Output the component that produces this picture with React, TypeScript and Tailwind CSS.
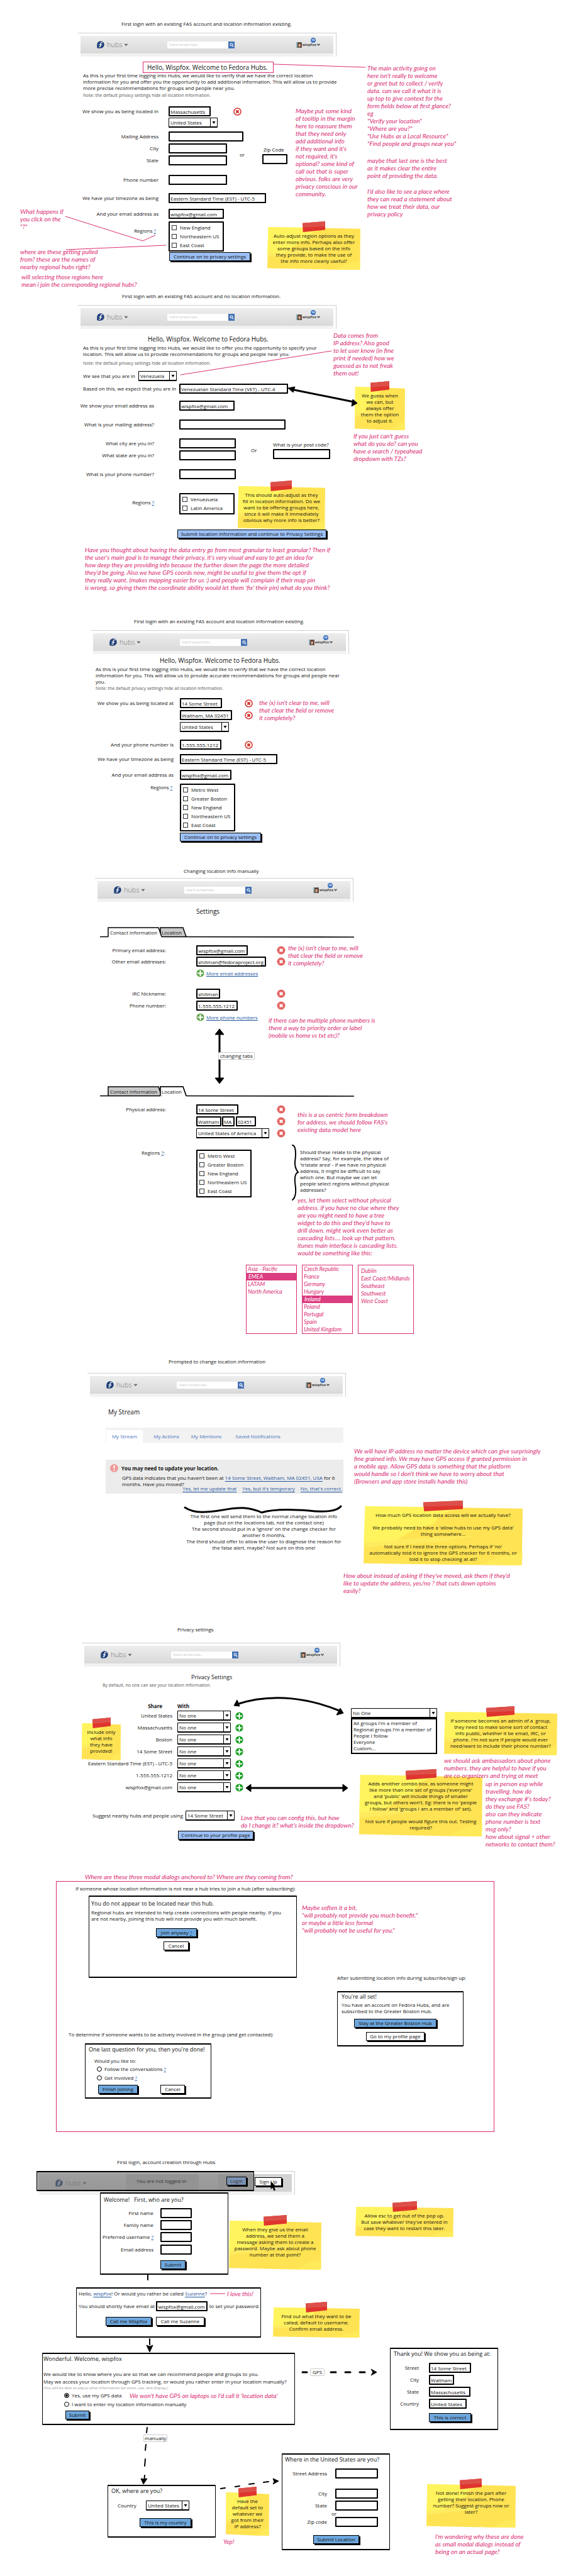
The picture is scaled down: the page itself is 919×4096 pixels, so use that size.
import React from "react";

type Kids = { children?: React.ReactNode; className?: string };

/* ---------- drawing primitives ---------- */

function HubsLogo() {
  return (
    <svg viewBox="0 0 24 24" className="h-3 w-3 shrink-0" aria-hidden="true">
      <path d="M12 0.5A11.5 11.5 0 0 0 .5 12v8.6A2.9 2.9 0 0 0 3.4 23.5H12A11.5 11.5 0 0 0 12 .5Z" fill="#1f3f77" />
      <path
        d="M17 5.2c-3.2-1-5 .6-5 3.6v6.4c0 2.8-1.6 4.2-4.6 3.6M7.6 12.2h8"
        fill="none"
        stroke="#fff"
        strokeWidth="2.6"
        strokeLinecap="round"
      />
    </svg>
  );
}

function Chevron() {
  return (
    <svg viewBox="0 0 10 8" className="h-1 w-[5px] shrink-0" aria-hidden="true">
      <path d="M1 1.5 5 6l4-4.500" fill="none" stroke="#444" strokeWidth="2.4" />
    </svg>
  );
}

function Avatar() {
  return (
    <svg viewBox="0 0 18 18" className="h-[9px] w-[9px] shrink-0" aria-hidden="true">
      <rect width="18" height="18" fill="#6f6259" />
      <rect width="4" height="18" fill="#8fb0b8" />
      <ellipse cx="10" cy="9" rx="4.500" ry="6" fill="#dba98c" />
      <path d="M4 18c0-14 2-16 6-16s7 3 6 16l-3-3c2-8 0-10-3-10s-4 3-3 10Z" fill="#4a2f26" />
    </svg>
  );
}

function Bar({ children, className = "" }: Kids) {
  return (
    <header className={`h-[38px] w-[411px] border-t border-r border-[#cfcfcf] ${className}`}>
      <div className="relative mt-[4px] ml-[4px] flex h-[28px] w-[402px] items-center bg-linear-to-b from-[#ededed] to-[#d9d9d9] pl-[26px]">
        <a href="#home" className="flex w-[112px] items-center">
          <HubsLogo />
          <span className="mr-[3px] ml-[4px] text-[11px] leading-3 font-light text-[#777]">hubs</span>
          <Chevron />
        </a>
        {children}
      </div>
      <div className="ml-[4px] h-[5px] w-[402px] bg-[#f2f2f2]" />
    </header>
  );
}

function HubsHeader({ className = "" }: { className?: string }) {
  return (
    <Bar className={className}>
      <div className="flex h-[11px]">
        <input
          type="search"
          aria-label="Search across hubs"
          placeholder="Search across hubs..."
          className="w-[97px] bg-white px-[3px] text-[5px] font-light outline-none placeholder:text-[#999]"
        />
        <button type="button" aria-label="Search" className="flex w-[10px] items-center justify-center bg-[#4472b4]">
          <svg viewBox="0 0 12 12" className="h-[7px] w-[7px]" aria-hidden="true">
            <circle cx="5" cy="5" r="3.200" fill="none" stroke="#fff" strokeWidth="1.800" />
            <path d="m7.400 7.400 3.200 3.600" stroke="#fff" strokeWidth="2" />
          </svg>
        </button>
      </div>
      <div className="relative mr-[21px] ml-auto flex items-center gap-px">
        <Avatar />
        <span className="text-[6px] leading-2 font-semibold text-[#222]">wispfox</span>
        <Chevron />
        <span className="absolute -top-[7px] left-[23px] flex h-2 w-2 items-center justify-center rounded-full bg-[#3b72c0] text-[4px] leading-none font-bold text-white">
          18
        </span>
      </div>
    </Bar>
  );
}

function RemoveOutline() {
  return (
    <button type="button" aria-label="Remove" className="h-[13px] w-[13px] shrink-0">
      <svg viewBox="0 0 26 26" aria-hidden="true">
        <circle cx="13" cy="13" r="11" fill="#fff" stroke="#d22e28" strokeWidth="3" />
        <path d="m9 9 8 8m0-8-8 8" stroke="#d22e28" strokeWidth="4.500" />
      </svg>
    </button>
  );
}

function RemoveSolid({ className = "" }: { className?: string }) {
  return (
    <button type="button" aria-label="Remove" className={`h-[14px] w-[14px] shrink-0 ${className}`}>
      <svg viewBox="0 0 28 28" aria-hidden="true">
        <circle cx="14" cy="14" r="13" fill="#e26462" />
        <path d="m9.500 9.500 9 9m0-9-9 9" stroke="#fff" strokeWidth="4.500" />
      </svg>
    </button>
  );
}

function Plus({ color }: { color: string }) {
  return (
    <svg viewBox="0 0 28 28" className="h-[13px] w-[13px] shrink-0" aria-hidden="true">
      <circle cx="14" cy="14" r="13" fill={color} />
      <path d="M14 6v16M6 14h16" stroke="#fff" strokeWidth="4.500" strokeLinecap="round" />
    </svg>
  );
}

function Note({ children, className = "", tape }: Kids & { tape: string }) {
  return (
    <aside className={`absolute flex justify-center ${className}`}>
      <svg viewBox="0 0 100 100" preserveAspectRatio="none" className="absolute inset-0 h-full w-full" aria-hidden="true">
        <polygon points="1,0 30,1 100,4 99.500,100 70,99.500 0,96.500" fill="#ffe352" />
        <polygon points="1,0 30,1 60,3 48,14 44,30 34,36 20,58 0,62" fill="#fff962" opacity="0.75" />
        <polygon points="0,62 22,56 70,50 48,60 0,70" fill="#fff06a" opacity="0.6" />
        <polygon points="72,99 88,84 100,80 99.500,100" fill="#ffeb5c" opacity="0.8" />
      </svg>
      <svg viewBox="0 0 100 100" preserveAspectRatio="none" className={`absolute -top-[9px] h-[17px] ${tape}`} aria-hidden="true">
        <polygon points="0,16 100,0 100,80 2,100" fill="#df352e" />
        <polygon points="0,16 100,0 100,46 0,58" fill="#dc5049" />
      </svg>
      <p className="relative pt-[9px] text-center whitespace-pre">{children}</p>
    </aside>
  );
}

function Scribble({ children, className = "" }: Kids) {
  return (
    <p
      className={`absolute font-['Liberation_Sans_Narrow','Lato',sans-serif] text-[10px] leading-[12px] whitespace-pre text-[#da2c74] italic ${className}`}
    >
      {children}
    </p>
  );
}

function Sketch({ children }: Kids) {
  return (
    <svg className="pointer-events-none absolute inset-0 h-full w-full overflow-visible" aria-hidden="true">
      {children}
    </svg>
  );
}

/* ---------- controls ---------- */

function Field({ id, value, className }: { id: string; value?: string; className: string }) {
  return (
    <input
      id={id}
      aria-label={id.replace(/-/g, " ")}
      defaultValue={value}
      className={`block h-4 shrink-0 rounded-[1px] border-2 border-black bg-white pl-px text-[8px] leading-[10px] outline-none ${className}`}
    />
  );
}

function Picker({ id, options, className }: { id: string; options: string[]; className: string }) {
  return (
    <span className={`flex h-4 shrink-0 rounded-[1px] border border-b-2 border-black bg-white ${className}`}>
      <select
        id={id}
        aria-label={id.replace(/-/g, " ")}
        className="min-w-0 flex-1 appearance-none bg-transparent pl-[2px] text-[8px] leading-[10px] outline-none"
      >
        {options.map((o) => (
          <option key={o}>{o}</option>
        ))}
      </select>
      <span className="flex w-[11px] items-center justify-center border-l border-black">
        <svg viewBox="0 0 10 8" className="h-1 w-[6px]" aria-hidden="true">
          <path d="M0 0h10L5 8Z" />
        </svg>
      </span>
    </span>
  );
}

function Btn({ children, tone, className = "" }: Kids & { tone: "sky" | "blue" | "white" }) {
  const tones = { sky: "bg-[#9cc0f6]", blue: "bg-[#6da6dc]", white: "bg-white" };
  return (
    <button
      type="button"
      className={`flex h-[14px] shrink-0 items-center justify-center border border-black whitespace-nowrap shadow-[2px_2px_0_#000] ${tones[tone]} ${className}`}
    >
      {children}
    </button>
  );
}

function Row({ label, htmlFor, width, gap, className = "", children }: Kids & { label?: React.ReactNode; htmlFor?: string; width: string; gap: string }) {
  return (
    <div className={`flex h-4 items-center ${className}`}>
      <label htmlFor={htmlFor} className={`shrink-0 text-right whitespace-nowrap ${width} ${gap}`}>
        {label}
      </label>
      {children}
    </div>
  );
}

function Help({ className = "" }: { className?: string }) {
  return (
    <a href="#help" aria-label="Help" className={`text-[#2a62ad] underline ${className}`}>
      ?
    </a>
  );
}

function Checks({ items, name, className = "" }: { items: string[]; name: string; className?: string }) {
  return (
    <div className={`w-[88px] rounded-[1px] border-2 border-black bg-white py-px ${className}`}>
      {items.map((item) => (
        <label key={item} className="flex h-[14px] items-center pl-[3px] whitespace-nowrap">
          <input type="checkbox" name={name} className="mr-[5px] h-2 w-2 appearance-none border border-[#333] checked:bg-black" />
          {item}
        </label>
      ))}
    </div>
  );
}

function Radio({ name, on, children, className = "" }: Kids & { name: string; on?: boolean }) {
  return (
    <label className={`flex h-[10px] items-center whitespace-nowrap ${className}`}>
      <input
        type="radio"
        name={name}
        defaultChecked={on}
        className="mr-[4px] h-2 w-2 appearance-none rounded-full border border-black bg-white checked:bg-black checked:shadow-[inset_0_0_0_1px_white]"
      />
      {children}
    </label>
  );
}

function Dialog({ children, className = "" }: Kids) {
  return <div className={`rounded-[1px] border-x border-y-2 border-black bg-white ${className}`}>{children}</div>;
}

function Tabs({ active }: { active: 0 | 1 }) {
  return (
    <div role="tablist" className="relative ml-[159px] flex h-[17px] w-[404px] items-center">
      <svg viewBox="0 0 404 17" className="absolute inset-0 h-full w-full" aria-hidden="true">
        <path d="M96 15V1h36l5 14.500" fill={active === 1 ? "#fff" : "#c9c9c9"} stroke="#000" strokeWidth="1.500" />
        <path d="M13 15.500V1h80l5 14.500" fill={active === 0 ? "#fff" : "#c9c9c9"} stroke="#000" strokeWidth="1.500" />
        {active === 1 && <path d="M96 15V1h36l5 14.500Z" fill="#fff" />}
        {active === 1 && <path d="M96 15V1h36l5 14.500" fill="none" stroke="#000" strokeWidth="1.500" />}
        <path d={active === 0 ? "M0 15.500H13M98 15.500 404 16" : "M0 15.500H96M137 15.500 404 16"} stroke="#000" strokeWidth="1.600" />
      </svg>
      <button type="button" role="tab" aria-selected={active === 0} className="relative ml-4 w-[82px] text-left">
        Contact Information
      </button>
      <button type="button" role="tab" aria-selected={active === 1} className="relative text-left">
        Location
      </button>
    </div>
  );
}

const title = "whitespace-nowrap";
const regions = ["Metro West", "Greater Boston", "New England", "Northeastern US", "East Coast"];

/* ---------- boards ---------- */

function LoginWithLocation() {
  const c = { width: "w-32", gap: "mr-4" };
  return (
    <section className="relative min-h-[460px] pt-[33px]">
      <h2 className={`ml-[193px] ${title}`}>First login with an existing FAS account and location information existing.</h2>
      <HubsHeader className="mt-[9px] ml-[124px]" />
      <form className="pl-[124px]">
        <h3 className="mt-[8px] ml-[103px] flex h-[18px] w-[208px] items-center border border-[#da2c74] pl-[6px] text-[10px] whitespace-nowrap">
          Hello, Wispfox. Welcome to Fedora Hubs.
        </h3>
        <p className="-mt-px ml-[8px] whitespace-pre">{`As this is your first time logging into Hubs, we would like to verify that we have the correct location
information for you and offer you the opportunity to add additional information. This will allow us to provide
more precise recommendations for groups and people near you.`}</p>
        <p className="mt-[2px] ml-[8px] text-[7px] text-[#555]">Note: the default privacy settings hide all location information.</p>
        <Row {...c} label="We show you as being located in" htmlFor="state-1" className="mt-3">
          <Field id="state-1" value="Massachusetts" className="mr-[36px] w-[67px]" />
          <RemoveOutline />
        </Row>
        <Row {...c} className="mt-[2px]">
          <Picker id="country-1" options={["United States"]} className="w-[78px]" />
        </Row>
        <Row {...c} label="Mailing Address" htmlFor="mailing-1" className="mt-[6px]">
          <Field id="mailing-1" className="w-[119px]" />
        </Row>
        <div className="mt-[3px] flex">
          <div>
            <Row {...c} label="City" htmlFor="city-1">
              <Field id="city-1" className="w-[93px]" />
            </Row>
            <Row {...c} label="State" htmlFor="region-1" className="mt-[3px]">
              <Field id="region-1" className="w-[93px]" />
            </Row>
          </div>
          <span className="mt-[13px] ml-5 w-9">or</span>
          <div className="mt-[5px]">
            <label htmlFor="zip-1" className="ml-[2px] block">Zip Code</label>
            <Field id="zip-1" className="mt-[2px] w-10" />
          </div>
        </div>
        <Row {...c} label="Phone number" htmlFor="phone-1" className="mt-[15px]">
          <Field id="phone-1" className="w-[93px]" />
        </Row>
        <Row {...c} label="We have your timezone as being" htmlFor="timezone-1" className="mt-[13px]">
          <Field id="timezone-1" value="Eastern Standard Time (EST) - UTC-5" className="w-[155px]" />
        </Row>
        <Row {...c} label="And your email address as" htmlFor="email-1" className="mt-[9px]">
          <Field id="email-1" value="wispfox@gmail.com" className="w-[88px]" />
        </Row>
        <div className="mt-1 flex">
          <span className="mr-5 w-[124px] pt-[10px] text-right">Regions <Help /></span>
          <Checks name="regions-1" items={["New England", "Northeastern US", "East Coast"]} />
        </div>
        <Btn tone="sky" className="mt-px ml-[145px] w-[129px]">Continue on to privacy settings</Btn>
      </form>

      <Note className="top-[361px] left-[425px] h-[68px] w-[148px]" tape="left-[56px] w-9">{`Auto-adjust region options as they
enter more info. Perhaps also offer
some groups based on the info
they provide, to make the use of
the info more clearly useful?`}</Note>
      <Scribble className="top-[170px] left-[470px]">{`Maybe put some kind
of tooltip in the margin
here to reassure them
that they need only
add additional info
if they want and it's
not required, it's
optional? some kind of
call out that is super
obvious. folks are very
privacy conscious in our
community.`}</Scribble>
      <Scribble className="top-[102px] left-[584px]">{`The main activity going on
here isn't really to welcome
or greet but to collect / verify
data. can we call it what it is
up top to give context for the
form fields below at first glance?
eg
"Verify your location"
"Where are you?"
"Use Hubs as a Local Resource"
"Find people and groups near you"`}</Scribble>
      <Scribble className="top-[249px] left-[584px]">{`maybe that last one is the best
as it makes clear the entire
point of providing the data.`}</Scribble>
      <Scribble className="top-[298px] left-[584px]">{`I'd also like to see a place where
they can read a statement about
how we treat their data, our
privacy policy`}</Scribble>
      <Scribble className="top-[330px] left-[32px]">{`What happens if
you click on the
"?"`}</Scribble>
      <Scribble className="top-[394px] left-[32px]">{`where are these getting pulled
from? these are the names of
nearby regional hubs right?`}</Scribble>
      <Scribble className="top-[434px] left-[34px]">{`will selecting those regions here
mean i join the corresponding regional hubs?`}</Scribble>
      <Sketch>
        <path d="M435 102 581 107M104 344 227 383 247 374M105 397 264 390" fill="none" stroke="#da2c74" />
      </Sketch>
    </section>
  );
}

function LoginWithoutLocation() {
  const c = { width: "w-[121px]", gap: "mr-[40px]" };
  return (
    <section className="relative min-h-[515px] pt-[6px]">
      <h2 className={`ml-[194px] ${title}`}>First login with an existing FAS account and no location information.</h2>
      <HubsHeader className="mt-[9px] ml-[124px]" />
      <form className="pl-[124px]">
        <h3 className="mt-[11px] ml-[111px] text-[10px] whitespace-nowrap">Hello, Wispfox. Welcome to Fedora Hubs.</h3>
        <p className="mt-[4px] ml-[8px] whitespace-pre">{`As this is your first time logging into Hubs, we would like to offer you the opportunity to specify your
location. This will allow us to provide recommendations for groups and people near you.`}</p>
        <p className="mt-[5px] ml-[8px] text-[7px] text-[#555]">Note: the default privacy settings hide all location information.</p>
        <div className="mt-[7px] flex h-4 items-center">
          <label htmlFor="country-2" className="ml-[8px] w-[88px] whitespace-nowrap">We see that you are in</label>
          <Picker id="country-2" options={["Venezuela"]} className="w-[61px]" />
        </div>
        <div className="mt-1 flex h-4 items-center">
          <label htmlFor="timezone-2" className="ml-[8px] w-[153px] whitespace-nowrap">Based on this, we expect that you are in</label>
          <Field id="timezone-2" value="Venezuelan Standard Time (VET) - UTC-4" className="w-[173px]" />
        </div>
        <Row {...c} label="We show your email address as" htmlFor="email-2" className="mt-[11px]">
          <Field id="email-2" value="wispfox@gmail.com" className="w-[88px]" />
        </Row>
        <Row {...c} label="What is your mailing address?" htmlFor="mailing-2" className="mt-[14px]">
          <Field id="mailing-2" className="w-[169px]" />
        </Row>
        <div className="mt-[14px] flex">
          <div>
            <Row {...c} label="What city are you in?" htmlFor="city-2">
              <Field id="city-2" className="w-[90px]" />
            </Row>
            <Row {...c} label="What state are you in?" htmlFor="region-2" className="mt-[3px]">
              <Field id="region-2" className="w-[90px]" />
            </Row>
          </div>
          <span className="mt-[14px] ml-6 w-[35px]">Or</span>
          <div className="mt-[5px]">
            <label htmlFor="postcode-2" className="block whitespace-nowrap">What is your post code?</label>
            <Field id="postcode-2" className="mt-[2px] w-[91px]" />
          </div>
        </div>
        <Row {...c} label="What is your phone number?" htmlFor="phone-2" className="mt-[14px]">
          <Field id="phone-2" className="w-[90px]" />
        </Row>
        <div className="mt-[22px] flex">
          <span className="mr-[40px] w-[121px] pt-[10px] text-right">Regions <Help /></span>
          <Checks name="regions-2" items={["Venuezuela", "Latin America"]} />
        </div>
        <Btn tone="sky" className="mt-[24px] ml-[158px] w-[237px]">Submit location information and continue to Privacy Settings</Btn>
      </form>

      <Note className="top-[313px] left-[378px] h-[69px] w-[139px]" tape="left-[52px] w-[34px]">{`This should auto-adjust as they
fill in location information. Do we
want to be offering groups here,
since it will make it immediately
obvious why more info is better?`}</Note>
      <Note className="top-[155px] left-[564px] h-[69px] w-20" tape="left-[25px] w-[30px]">{`We guess when
we can, but
always offer
them the option
to adjust it.`}</Note>
      <Scribble className="top-[67px] left-[530px]">{`Data comes from
IP address? Also good
to let user know (in fine
print if needed) how we
guessed as to not freak
them out!`}</Scribble>
      <Scribble className="top-[227px] left-[562px]">{`If you just can't guess
what do you do? can you
have a search / typeahead
dropdown with TZs?`}</Scribble>
      <Scribble className="top-[408px] left-[135px]">{`Have you thought about having the data entry go from most granular to least granular? Then if
the user's main goal is to manage their privacy, it's very visual and easy to get an idea for
how deep they are providing info because the further down the page the more detailed
they'd be going. Also we have GPS coords now, might be useful to give them the opt if
they really want. (makes mapping easier for us :) and people will complain if their map pin
is wrong, so giving them the coordinate ability would let them 'fix' their pin) what do you think?`}</Scribble>
      <Sketch>
        <path d="M287 136 527 98" stroke="#da2c74" />
        <path d="M463 159 562 179" stroke="#000" strokeWidth="3" />
        <path d="m458 157 11-2-3 9ZM568 181l-9 5 2-11Z" stroke="#000" strokeLinejoin="round" />
      </Sketch>
    </section>
  );
}

function LoginFullAddress() {
  const c = { width: "w-[132px]", gap: "mr-[10px]" };
  return (
    <section className="relative min-h-[400px] pt-[8px]">
      <h2 className={`ml-[213px] ${title}`}>First login with an existing FAS account and location information existing.</h2>
      <HubsHeader className="mt-[9px] ml-[144px]" />
      <form className="pl-[144px]">
        <h3 className="mt-[5px] ml-[110px] text-[10px] whitespace-nowrap">Hello, Wispfox. Welcome to Fedora Hubs.</h3>
        <p className="mt-[4px] ml-[8px] whitespace-pre">{`As this is your first time logging into Hubs, we would like to verify that we have the correct location
information for you. This will allow us to provide accurate recommendations for groups and people near
you.`}</p>
        <p className="mt-px ml-[8px] text-[7px] text-[#555]">Note: the default privacy settings hide all location information.</p>
        <Row {...c} label="We show you as being located at" htmlFor="street-3" className="mt-[10px]">
          <Field id="street-3" value="14 Some Street" className="mr-[36px] w-[67px]" />
          <RemoveOutline />
        </Row>
        <Row {...c} className="mt-[3px]">
          <Field id="city-3" value="Waltham, MA 02451" className="mr-[20px] w-[83px]" />
          <RemoveOutline />
        </Row>
        <Row {...c} className="mt-[3px]">
          <Picker id="country-3" options={["United States"]} className="w-[78px]" />
        </Row>
        <Row {...c} label="And your phone number is" htmlFor="phone-3" className="mt-[12px]">
          <Field id="phone-3" value="1-555-555-1212" className="mr-[37px] w-[66px]" />
          <RemoveOutline />
        </Row>
        <Row {...c} label="We have your timezone as being" htmlFor="timezone-3" className="mt-[7px]">
          <Field id="timezone-3" value="Eastern Standard Time (EST) - UTC-5" className="w-[155px]" />
        </Row>
        <Row {...c} label="And your email address as" htmlFor="email-3" className="mt-[9px]">
          <Field id="email-3" value="wispfox@gmail.com" className="w-[82px]" />
        </Row>
        <div className="mt-[6px] flex">
          <span className="mr-[12px] w-[130px] pt-[1px] text-right">Regions <Help /></span>
          <Checks name="regions-3" items={regions} />
        </div>
        <Btn tone="sky" className="mt-[2px] ml-[142px] w-[129px]">Continue on to privacy settings</Btn>
      </form>
      <Scribble className="top-[136px] left-[412px]">{`the (x) isn't clear to me, will
that clear the field or remove
it completely?`}</Scribble>
    </section>
  );
}

function Settings() {
  const c = { width: "w-[113px]", gap: "mr-[48px]" };
  const box = "h-[110px] border border-[#da2c74]";
  const on = "-ml-[3px] bg-[#dc3c80] pl-[4px] text-white";
  return (
    <section className="relative min-h-[775px] pt-[5px]">
      <h2 className={`ml-[292px] ${title}`}>Changing location info manually</h2>
      <HubsHeader className="mt-[6px] ml-[151px]" />
      <h3 className="mt-[10px] mb-[20px] ml-[312px] text-[10px]">Settings</h3>
      <Tabs active={0} />
      <form className="mt-[12px] ml-[151px] w-[303px]">
        <Row {...c} label="Primary email address:" htmlFor="primary-email">
          <Field id="primary-email" value="wispfox@gmail.com" className="w-[82px]" />
          <RemoveSolid className="ml-auto" />
        </Row>
        <Row {...c} label="Other email addresses:" htmlFor="other-email" className="mt-[2px]">
          <Field id="other-email" value="shillman@fedoraproject.org" className="w-[111px]" />
          <RemoveSolid className="ml-auto" />
        </Row>
        <a href="#more-email" className="mt-[4px] ml-[161px] flex items-center gap-[3px] text-[#20579e] underline">
          <Plus color="#5fa548" /> More email addresses
        </a>
        <Row {...c} label="IRC Nickname:" htmlFor="irc-nickname" className="mt-[18px]">
          <Field id="irc-nickname" value="shillman" className="w-[38px]" />
          <RemoveSolid className="ml-auto" />
        </Row>
        <Row {...c} label="Phone number:" htmlFor="phone-4" className="mt-[3px]">
          <Field id="phone-4" value="1-555-555-1212" className="w-[66px]" />
          <RemoveSolid className="ml-auto" />
        </Row>
        <a href="#more-phone" className="mt-[4px] ml-[161px] flex items-center gap-[3px] text-[#20579e] underline">
          <Plus color="#5fa548" /> More phone numbers
        </a>
      </form>
      <div className="mt-[103px]">
        <Tabs active={1} />
      </div>
      <form className="mt-[12px] ml-[151px] w-[303px]">
        <Row {...c} label="Physical address:" htmlFor="street-4">
          <Field id="street-4" value="14 Some Street" className="w-[67px]" />
          <RemoveSolid className="ml-auto" />
        </Row>
        <Row {...c} className="mt-[3px]">
          <Field id="city-4" value="Waltham" className="mr-px w-10" />
          <Field id="state-4" value="MA" className="mr-[2px] w-5" />
          <Field id="zip-4" value="02451" className="w-8" />
          <RemoveSolid className="ml-auto" />
        </Row>
        <Row {...c} className="mt-[3px]">
          <Picker id="country-4" options={["United States of America"]} className="w-[116px]" />
          <RemoveSolid className="ml-auto" />
        </Row>
        <div className="mt-[18px] flex">
          <span className="mr-[50px] w-[111px] text-right">Regions <Help />:</span>
          <Checks name="regions-4" items={regions} />
        </div>
      </form>

      <Scribble className="top-[126px] left-[458px]">{`the (x) isn't clear to me, will
that clear the field or remove
it completely?`}</Scribble>
      <Scribble className="top-[241px] left-[427px]">{`if there can be multiple phone numbers is
there a way to priority order or label
(mobile vs home vs txt etc)?`}</Scribble>
      <Sketch>
        <path d="M349 266V343" stroke="#000" strokeWidth="3" />
        <path d="m349 261 7 9h-14ZM349 348l7-9h-14Z" stroke="#000" strokeLinejoin="round" />
        <path
          d="M465 446c5 0 6 12 4 26-1 10 3 14 5 17-6 2-6 12-4 24 1 12-1 17-5 20"
          fill="none"
          stroke="#000"
          strokeWidth="2"
          strokeLinecap="round"
        />
      </Sketch>
      <span className="absolute top-[298px] left-[347px] rounded-[2px] border border-[#ccc] bg-white px-[2px] whitespace-nowrap">changing tabs</span>
      <Scribble className="top-[391px] left-[473px]">{`this is a us centric form breakdown
for address, we should follow FAS's
existing data model here`}</Scribble>
      <p className="absolute top-[452px] left-[477px] whitespace-pre">{`Should these relate to the physical
address? Say, for example, the idea of
'tristate area' - if we have no physical
address, it might be difficult to say
which one. But maybe we can let
people select regions without physical
addresses?`}</p>
      <Scribble className="top-[527px] left-[473px]">{`yes, let them select without physical
address. if you have no clue where they
are you might need to have a tree
widget to do this and they'd have to
drill down. might work even better as
cascading lists.... look up that pattern.
itunes main interface is cascading lists.
would be something like this:`}</Scribble>
      <div className="absolute top-[636px] left-[391px] flex gap-2 font-['Liberation_Sans_Narrow','Lato',sans-serif] text-[9px] leading-[12px] whitespace-nowrap text-[#da2c74] italic">
        <ul className={`w-[81px] pl-[2px] ${box}`}>
          <li>Asia - Pacific</li>
          <li className={on}>EMEA</li>
          <li>LATAM</li>
          <li>North America</li>
        </ul>
        <ul className={`w-[81px] pl-[2px] ${box}`}>
          <li>Czech Republic</li>
          <li>France</li>
          <li>Germany</li>
          <li>Hungary</li>
          <li className={on}>Ireland</li>
          <li>Poland</li>
          <li>Portugal</li>
          <li>Spain</li>
          <li>United Kingdom</li>
        </ul>
        <ul className={`w-[89px] pt-[3px] pl-[4px] ${box}`}>
          <li>Dublin</li>
          <li>East Coast/Midlands</li>
          <li>Southeast</li>
          <li>Southwest</li>
          <li>West Coast</li>
        </ul>
      </div>
    </section>
  );
}

function Prompted() {
  const link = "text-[#1d559f] underline underline-offset-2";
  return (
    <section className="relative min-h-[425px] pt-[10px]">
      <h2 className={`ml-[268px] ${title}`}>Prompted to change location information</h2>
      <HubsHeader className="mt-[13px] ml-[139px]" />
      <h3 className="mt-[19px] ml-[172px] text-[10px]">My Stream</h3>
      <nav className="mt-[20px] ml-[168px] flex h-[24px] w-[378px] items-end bg-[#f2f2f2] text-[#4a76bb]">
        <a href="#stream" className="ml-px flex h-[20px] w-[58px] items-center justify-center bg-white">My Stream</a>
        <a href="#actions" className="flex h-[20px] w-[75px] items-center justify-center">My Actions</a>
        <a href="#mentions" className="flex h-[20px] w-[52px] items-center justify-center whitespace-nowrap">My Mentions</a>
        <a href="#saved" className="ml-[14px] flex h-[20px] w-[84px] items-center justify-center whitespace-nowrap">Saved Notifications</a>
      </nav>
      <div role="alert" className="mt-[27px] ml-[168px] h-[54px] w-[378px] bg-[#ececec] pt-[7px]">
        <div className="flex items-center">
          <svg viewBox="0 0 26 26" className="mr-[5px] ml-[7px] h-[13px] w-[13px]" aria-hidden="true">
            <circle cx="13" cy="13" r="13" fill="#ee9b98" />
            <path d="M13 4v11M13 18.500v3" stroke="#fff" strokeWidth="4" />
          </svg>
          <strong className="font-bold">You may need to update your location.</strong>
        </div>
        <p className="mt-[4px] ml-[26px] whitespace-nowrap">
          GPS data indicates that you haven't been at{" "}
          <a href="#address" className={link}>14 Some Street, Waltham, MA 02451, USA</a> for 6<br />
          months. Have you moved?
        </p>
        <div className="-mt-[3px] mr-[2px] ml-auto flex justify-end gap-[9px] whitespace-nowrap">
          <a href="#update" className={link}>Yes, let me update that</a>
          <a href="#temporary" className={link}>Yes, but it's temporary</a>
          <a href="#correct" className={link}>No, that's correct.</a>
        </div>
      </div>
      <p className="mt-[31px] ml-[294px] w-[251px] text-center whitespace-nowrap">
        The first one will send them to the normal change location info
        <br />
        page (but on the locations tab, not the contact one)
        <br />
        The second should put in a 'ignore' on the change checker for
        <br />
        another 6 months.
        <br />
        The third should offer to allow the user to diagnose the reason for
        <br />
        the false alert, maybe? Not sure on this one!
      </p>
      <Sketch>
        <path
          d="M294 247c15 10 35 8 60 4 26-5 42-5 62 4 20-6 50-5 75-3 25 3 45 1 51-7"
          fill="none"
          stroke="#000"
          strokeWidth="3"
          strokeLinecap="round"
        />
      </Sketch>
      <Scribble className="top-[151px] left-[563px]">{`We will have IP address no matter the device which can give surprisingly
fine grained info. We may have GPS access if granted permission in
a mobile app. Allow GPS data is something that the platform
would handle so I don't think we have to worry about that
(Browsers and app store installs handle this)`}</Scribble>
      <Note className="top-[245px] left-[578px] h-[94px] w-[253px]" tape="left-[95px] w-[63px]">{`How much GPS location data access will we actually have?

We probably need to have a 'allow hubs to use my GPS data'
thing somewhere...

Not sure if I need the three options. Perhaps if 'no'
automatically told it to ignore the GPS checker for 6 months, or
told it to stop checking at all?`}</Note>
      <Scribble className="top-[349px] left-[546px]">{`How about instead of asking if they've moved, ask them if they'd
like to update the address, yes/no ? that cuts down optoins
easily?`}</Scribble>
    </section>
  );
}

function Privacy() {
  const rows = [
    "United States",
    "Massachusetts",
    "Boston",
    "14 Some Street",
    "Eastern Standard Time (EST) - UTC-5",
    "1-555-555-1212",
    "wispfox@gmail.com",
  ];
  return (
    <section className="relative min-h-[395px] pt-[11px]">
      <Note className="top-[165px] left-[130px] h-[59px] w-[62px]" tape="left-[17px] w-[29px]">{`Include only
what info
they have
provided!`}</Note>
      <h2 className={`ml-[282px] ${title}`}>Privacy settings</h2>
      <HubsHeader className="mt-[16px] ml-[130px]" />
      <form className="relative pl-[124px]">
        <h3 className="mt-[12px] ml-[180px] text-[9px]">Privacy Settings</h3>
        <p className="mt-[3px] ml-[39px] text-[7px] text-[#555]">By default, no one can see your location information.</p>
        <div className="mt-[23px] mb-[2px] flex font-bold">
          <span className="mr-6 w-[134px] text-right">Share</span>
          <span>With</span>
        </div>
        {rows.map((label, i) => (
          <Row key={label} label={label} htmlFor={`share-${i}`} width="w-[150px]" gap="mr-2" className="mb-[3px]">
            <Picker id={`share-${i}`} options={["No one"]} className="mr-[7px] w-[85px]" />
            <button type="button" aria-label={`Add audience for ${label}`}>
              <Plus color="#109c1c" />
            </button>
          </Row>
        ))}
        <div className="mt-[29px] flex items-center">
          <label htmlFor="suggest" className="mr-[4px] w-[167px] text-right whitespace-nowrap">Suggest nearby hubs and people using</label>
          <Picker id="suggest" options={["14 Some Street"]} className="w-[78px]" />
        </div>
        <Btn tone="sky" className="mt-4 ml-[159px] w-[120px]">Continue to your profile page</Btn>
      </form>

      <div className="absolute top-[141px] left-[558px] w-[137px]">
        <Picker id="audience" options={["No One"]} className="w-full" />
        <ul className="border-2 border-black bg-white pt-px pb-[2px] pl-[2px] whitespace-nowrap">
          <li>All groups I'm a member of</li>
          <li>Regional groups I'm a member of</li>
          <li>People I follow</li>
          <li>Everyone</li>
          <li>Custom...</li>
        </ul>
      </div>
      <Sketch>
        <path d="M376 135c60-20 120-8 166 11M397 268H548" fill="none" stroke="#000" strokeWidth="3" />
        <path d="m372 137 5-9 4 10ZM546 149l-11 3 6-11ZM391 268l8-6v12ZM553 268l-8-6v12Z" stroke="#000" strokeLinejoin="round" />
      </Sketch>
      <Note className="top-[147px] left-[706px] h-[69px] w-[180px]" tape="left-[67px] w-[45px]">{`If someone becomes an admin of a  group,
they need to make some sort of contact
info public, whether it be email, IRC, or
phone. I'm not sure if people would ever
need/want to include their phone number?`}</Note>
      <Note className="top-[247px] left-[571px] h-[98px] w-[196px]" tape="left-[74px] w-[49px]">{`Adds another combo box, as someone might
like more than one set of groups ('everyone'
and 'public' will include things of smaller
groups, but others won't. Eg: there is no 'people
I follow' and 'groups I am a member of' set).

Not sure if people would figure this out. Testing
required?`}</Note>
      <Scribble className="top-[309px] left-[383px]">{`Love that you can config this, but how
do I change it? what's inside the dropdown?`}</Scribble>
      <Scribble className="top-[218px] left-[706px]">{`we should ask ambassadors about phone
numbers. they are helpful to have if you
are co-organizers and trying ot meet`}</Scribble>
      <Scribble className="top-[255px] left-[772px]">{`up in person esp while
travelling. how do
they exchange #'s today?
do they use FAS?
also can they indicate
phone number is text
msg only?
how about signal + other
networks to contact them?`}</Scribble>
    </section>
  );
}

function Modals() {
  return (
    <section className="relative min-h-[455px] pt-[21px] pl-[89px]">
      <Scribble className="top-[8px] left-[135px]">Where are these three modal dialogs anchored to? Where are they coming from?</Scribble>
      <div className="flex w-[697px] border border-[#da2c74] pb-[52px]">
        <div className="w-[446px] shrink-0">
          <p className="mt-[6px] ml-[30px] whitespace-nowrap">If someone whose location information is not near a hub tries to join a hub (after subscribing):</p>
          <Dialog className="mt-[6px] ml-[51px] min-h-[131px] w-[331px] pt-[6px] pl-[3px]">
            <h3 className="text-[9px]">You do not appear to be located near this hub.</h3>
            <p className="mt-[4px] whitespace-nowrap">
              Regional hubs are intended to help create connections with people nearby. If you
              <br />
              are not nearby, joining this hub will not provide you with much benefit.
            </p>
            <Btn tone="blue" className="mt-[10px] ml-[103px] w-[65px]">
              Join anyway&nbsp;<span className="text-[#1d559f] underline">?</span>
            </Btn>
            <Btn tone="white" className="mt-[7px] ml-[115px] w-[40px]">Cancel</Btn>
          </Dialog>
          <p className="mt-[85px] ml-[19px] whitespace-nowrap">To determine if someone wants to be actively involved in the group (and get contacted):</p>
          <Dialog className="mt-[9px] ml-[45px] min-h-[88px] w-[201px] pt-[3px] pl-[5px]">
            <h3 className="text-[9px] whitespace-nowrap">One last question for you, then you're done!</h3>
            <p className="mt-[8px] ml-[9px]">Would you like to:</p>
            <Radio name="involve" className="mt-[3px] ml-[13px]">Follow the conversations&nbsp;<Help /></Radio>
            <Radio name="involve" className="mt-[4px] ml-[13px]">Get involved&nbsp;<Help /></Radio>
            <div className="mt-[6px] ml-[15px] flex">
              <Btn tone="blue" className="mr-[36px] w-[63px]">Finish Joining</Btn>
              <Btn tone="white" className="w-[39px]">Cancel</Btn>
            </div>
          </Dialog>
        </div>
        <div className="pt-[148px]">
          <p className="whitespace-nowrap">After submitting location info during subscribe/sign up:</p>
          <Dialog className="mt-4 min-h-[88px] w-[201px] pt-[2px] pl-[6px]">
            <h3 className="text-[9px]">You're all set!</h3>
            <p className="mt-[3px] whitespace-nowrap">
              You have an account on Fedora Hubs, and are
              <br />
              subscribed to the Greater Boston Hub.
            </p>
            <Btn tone="blue" className="mt-[7px] ml-[20px] w-[131px]">Stay at the Greater Boston Hub</Btn>
            <Btn tone="white" className="mt-[7px] ml-[39px] w-[93px]">Go to my profile page</Btn>
          </Dialog>
        </div>
      </div>
      <Scribble className="top-[57px] left-[480px]">{`Maybe soften it a bit,
"will probably not provide you much benefit."
or maybe a little less formal
"will probably not be useful for you."`}</Scribble>
    </section>
  );
}

function AccountCreation() {
  const link = "text-[#1d559f] underline underline-offset-2";
  const who = { width: "w-[84px]", gap: "mr-[11px]" };
  const at = { width: "w-[45px]", gap: "mr-[16px]" };
  const us = { width: "w-[71px]", gap: "mr-[13px]" };
  return (
    <section className="relative min-h-[671px] pt-[8px]">
      <h2 className={`ml-[186px] ${title}`}>First login, account creation through Hubs</h2>
      <Bar className="mt-[9px] ml-[58px]">
        <div className="h-full w-[117px] bg-[#cfcfcf]" />
        <div className="ml-[31px] h-full w-[117px] bg-[#d3d3d3]" />
      </Bar>
      <div className="absolute top-[27px] left-[58px] flex h-[32px] w-[346px] items-center rounded-[1px] border-x border-y-2 border-black bg-[#6b6b6b]/60">
        <span className="ml-[158px] whitespace-nowrap text-[#333]">You are not logged in</span>
        <button
          type="button"
          className="mr-[11px] ml-auto h-[14px] w-8 border border-black bg-[#7b92b3] text-[#333] shadow-[2px_2px_0_#000]"
        >
          Login
        </button>
      </div>
      <div className="absolute top-[37px] left-[405px]">
        <Btn tone="white" className="w-[43px]">Sign Up</Btn>
        <svg viewBox="0 0 20 32" className="absolute top-[6px] left-[25px] h-4 w-[10px]" aria-hidden="true">
          <path d="M1 1v25l6-5 4 10 5-2-4-10h7Z" />
        </svg>
      </div>

      <Dialog className="absolute top-[61px] left-[159px] h-[131px] w-[204px] pt-[5px]">
        <h3 className="ml-[5px] text-[9px] whitespace-pre">Welcome!   First, who are you?</h3>
        <Row {...who} label="First name" htmlFor="first-name" className="mt-[8px]"><Field id="first-name" className="w-[50px]" /></Row>
        <Row {...who} label="Family name" htmlFor="family-name" className="mt-[3px]"><Field id="family-name" className="w-[50px]" /></Row>
        <Row {...who} label={<>Preferred username <Help /></>} htmlFor="username" className="mt-[3px]"><Field id="username" className="w-[50px]" /></Row>
        <Row {...who} label="Email address" htmlFor="email-9" className="mt-[4px]"><Field id="email-9" className="w-[50px]" /></Row>
        <Btn tone="blue" className="mt-[9px] ml-[95px] w-10">Submit</Btn>
      </Dialog>

      <Dialog className="absolute top-[212px] left-[121px] h-[80px] w-[294px] pt-[3px] pl-[3px]">
        <p className="whitespace-nowrap">
          Hello, <a href="#wispfox" className={link}>wispfox</a>! Or would you rather be called{" "}
          <a href="#suzanne" className={link}>Suzanne</a>?
        </p>
        <div className="mt-[7px] flex items-center justify-between whitespace-nowrap">
          <span>You should shortly have email at</span>
          <Field id="email-10" value="wispfox@gmail.com" className="w-[82px]" />
          <span className="mr-px">to set your password.</span>
        </div>
        <div className="mt-[9px] ml-[43px] flex">
          <Btn tone="blue" className="mr-[7px] w-[73px]">Call me Wispfox</Btn>
          <Btn tone="white" className="w-[77px]">Call me Suzanne</Btn>
        </div>
      </Dialog>

      <Dialog className="absolute top-[316px] left-[67px] h-[115px] w-[402px] pt-[3px] pl-px">
        <h3 className="text-[9px]">Wonderful. Welcome, wispfox</h3>
        <p className="mt-[13px] leading-[12px] whitespace-nowrap">
          We would like to know where you are so that we can recommend people and groups to you.
          <br />
          May we access your location through GPS tracking, or would you rather enter in your location manually?
        </p>
        <p className="text-[6px] leading-2 text-[#999]">(You will be able to adjust what information we store, use, and display.)</p>
        <Radio name="gps" on className="mt-[3px] ml-[33px]">Yes, use my GPS data</Radio>
        <Radio name="gps" className="mt-[4px] ml-[33px]">I want to enter my location information manually</Radio>
        <Btn tone="blue" className="mt-[5px] ml-[35px] w-[38px]">Submit</Btn>
      </Dialog>

      <Dialog className="absolute top-[308px] left-[620px] h-[131px] w-[172px] pt-[3px]">
        <h3 className="ml-[5px] text-[9px] whitespace-nowrap">Thank you! We show you as being at:</h3>
        <Row {...at} label="Street" htmlFor="street-9" className="mt-[9px]"><Field id="street-9" value="14 Some Street" className="w-[67px]" /></Row>
        <Row {...at} label="City" htmlFor="city-9" className="mt-[3px]"><Field id="city-9" value="Waltham" className="w-10" /></Row>
        <Row {...at} label="State" htmlFor="state-9" className="mt-[3px]"><Field id="state-9" value="Massachusetts" className="w-[66px]" /></Row>
        <Row {...at} label="Country" htmlFor="country-9" className="mt-[3px]"><Field id="country-9" value="United States" className="w-[60px]" /></Row>
        <Btn tone="blue" className="mt-[7px] ml-[61px] w-[67px]">This is correct</Btn>
      </Dialog>

      <Dialog className="absolute top-[526px] left-[171px] h-[84px] w-[172px] pt-[3px]">
        <h3 className="ml-[5px] text-[9px]">OK, where are you?</h3>
        <div className="mt-[10px] flex items-center">
          <label htmlFor="country-10" className="ml-[15px] w-[45px]">Country</label>
          <Picker id="country-10" options={["United States"]} className="w-[69px]" />
        </div>
        <Btn tone="blue" className="mt-[12px] ml-[50px] w-[82px]">This is my country</Btn>
      </Dialog>

      <Dialog className="absolute top-[476px] left-[448px] h-[154px] w-[172px] pt-[3px]">
        <h3 className="ml-[4px] text-[9px] whitespace-nowrap">Where in the United States are you?</h3>
        <Row {...us} label="Street Address" htmlFor="street-10" className="mt-[9px]"><Field id="street-10" className="w-[68px]" /></Row>
        <Row {...us} label="City" htmlFor="city-10" className="mt-4"><Field id="city-10" className="w-[68px]" /></Row>
        <Row {...us} label="State" htmlFor="state-10" className="mt-[3px]"><Field id="state-10" className="w-[68px]" /></Row>
        <p className="ml-[78px]">or</p>
        <Row {...us} label="Zip code" htmlFor="zip-10"><Field id="zip-10" className="w-[68px]" /></Row>
        <Btn tone="blue" className="mt-[13px] ml-[49px] w-[73px]">Submit Location</Btn>
      </Dialog>

      <Sketch>
        <path d="M235 192V200M238 294V303" stroke="#000" strokeWidth="2" strokeLinecap="round" />
        <path d="m238 315-5-11 5 2 5-2Z" stroke="#000" strokeLinejoin="round" />
        <path d="M481 347H488M526 347H534M549 347H557M572 347H580" stroke="#000" strokeWidth="3" strokeLinecap="round" />
        <path d="m599 347-9 5 3-5-3-5Z" stroke="#000" strokeLinejoin="round" />
        <path d="M234 435 233 443M232 462 231 471M231 485 230 496M230 511 229 521" stroke="#000" strokeWidth="2" strokeLinecap="round" />
        <path d="m228 525-4-9 4 1 6-1Z" stroke="#000" strokeLinejoin="round" />
        <path d="M351 532 358 531M374 529 381 528M396 525 404 524M419 522 427 521" stroke="#000" strokeWidth="2" strokeLinecap="round" />
        <path d="m443 520-9 5 2-4-2-5Z" stroke="#000" strokeLinejoin="round" />
        <path d="M334 222H358" stroke="#da2c74" />
      </Sketch>
      <span className="absolute top-[341px] left-[493px] rounded-[2px] border border-[#ccc] bg-white px-[3px]">GPS</span>
      <span className="absolute top-[446px] left-[228px] rounded-[2px] border border-[#ccc] bg-white px-px">manually</span>

      <Note className="top-[106px] left-[364px] h-[78px] w-[147px]" tape="left-[55px] w-[37px]">{`When they give us the email
address, we send them a
message asking them to create a
password. Maybe ask about phone
number at that point?`}</Note>
      <Note className="top-[84px] left-[565px] h-[48px] w-[156px]" tape="left-[59px] w-[39px]">{`Allow esc to get out of the pop up.
But save whatever they've entered in
case they want to restart this later.`}</Note>
      <Note className="top-[244px] left-[434px] h-[48px] w-[138px]" tape="left-[52px] w-[34px]">{`Find out what they want to be
called, default to username.
Confirm email address.`}</Note>
      <Note className="top-[538px] left-[359px] h-[69px] w-[69px]" tape="left-[20px] w-[29px]">{`Have the
default set to
whatever we
got from their
IP address?`}</Note>
      <Note className="top-[525px] left-[678px] h-[69px] w-[142px]" tape="left-[53px] w-[35px]">{`Not done! Finish the part after
getting their location. Phone
number? Suggest groups now or
later?`}</Note>

      <Scribble className="top-[216px] left-[361px]">I love this!</Scribble>
      <Scribble className="top-[378px] left-[206px]">We won't have GPS on laptops so I'd call it 'location data'</Scribble>
      <Scribble className="top-[610px] left-[355px]">Yep!</Scribble>
      <Scribble className="top-[602px] left-[692px]">{`I'm wondering why these are done
as small modal dialogs instead of
being on an actual page?`}</Scribble>
    </section>
  );
}

export default function App() {
  return (
    <main className="min-h-screen w-full overflow-x-hidden bg-white font-['Open_Sans',sans-serif] text-[8px] leading-[10px] text-[#111]">
      <LoginWithLocation />
      <LoginWithoutLocation />
      <LoginFullAddress />
      <Settings />
      <Prompted />
      <Privacy />
      <Modals />
      <AccountCreation />
    </main>
  );
}
